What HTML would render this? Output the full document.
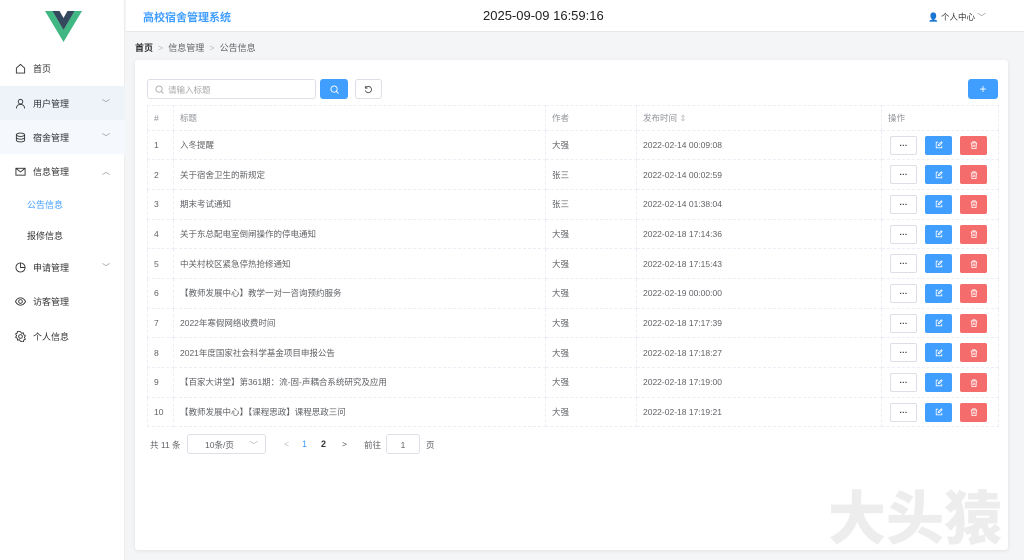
<!DOCTYPE html>
<html><head><meta charset="utf-8"><style>
*{box-sizing:border-box;margin:0;padding:0}
body{width:1024px;height:560px;overflow:hidden;background:#f4f5f7;font-family:"Liberation Sans","Noto Sans CJK SC",sans-serif;color:#606266;font-size:9px;position:relative}
.side{position:absolute;left:0;top:0;width:125px;height:560px;background:#fff;border-right:1px solid #eee}
.mi{position:absolute;left:0;width:125px;height:34px;display:flex;align-items:center;padding-left:15px;font-size:9px;color:#303133}
.mi svg{margin-right:7px}
.mi .ar{position:absolute;right:15px;font-size:8px;color:#888}
.hdr{position:absolute;left:126px;top:0;right:0;height:32px;background:#fff;border-bottom:1px solid #e8e8e8}
.bc{position:absolute;left:135px;top:41px;font-size:9px;color:#606266}
.card{position:absolute;left:135px;top:60px;width:873px;height:490px;background:#fff;border-radius:3px;box-shadow:0 1px 4px rgba(0,0,0,.08)}
.btn{position:absolute;border-radius:3px;display:flex;align-items:center;justify-content:center}
table{position:absolute;left:147px;top:105px;border-collapse:collapse;font-size:8.5px}
td{border:1px dashed #ebeef5;height:29.7px;padding:0 0 0 6px;color:#606266}
tr.h td{height:24.5px;color:#909399}
.ops{position:relative}
.b1,.b2,.b3{position:absolute;top:5px;height:19px;width:27px;border-radius:2px;display:flex;align-items:center;justify-content:center}
.b1{left:8px;border:1px solid #dcdfe6;background:#fff;color:#333;font-weight:bold;font-size:8px}
.b2{left:43px;background:#409eff}
.b3{left:78px;background:#f56c6c}
</style></head><body>
<div class="side">
<svg style="position:absolute;left:45px;top:11px" width="37" height="31" viewBox="0 0 37 31"><path d="M0 0h7.5l11 19 11-19H37L18.5 31z" fill="#41b883"/><path d="M7.5 0h7l4 7 4-7h7l-11 19z" fill="#34495e"/></svg>
<div class="mi" style="top:51px"><svg width="11" height="11" viewBox="0 0 12 12" fill="none" stroke="#333" stroke-width="1"><path d="M1.5 5.5L6 1.5l4.5 4V11h-9z"/></svg>首页</div>
<div class="mi" style="top:86px;background:#eef3fa"><svg width="11" height="11" viewBox="0 0 12 12" fill="none" stroke="#333"><circle cx="6" cy="4" r="2.5"/><path d="M1.5 11.5c0-3 2-4.5 4.5-4.5s4.5 1.5 4.5 4.5"/></svg>用户管理<span class="ar">﹀</span></div>
<div class="mi" style="top:120px;background:#f5f8fc"><svg width="11" height="11" viewBox="0 0 12 12" fill="none" stroke="#333"><ellipse cx="6" cy="3" rx="4.5" ry="1.8"/><path d="M1.5 3v6c0 1 2 1.8 4.5 1.8s4.5-.8 4.5-1.8V3M1.5 6c0 1 2 1.8 4.5 1.8s4.5-.8 4.5-1.8"/></svg>宿舍管理<span class="ar">﹀</span></div>
<div class="mi" style="top:154px"><svg width="11" height="11" viewBox="0 0 12 12" fill="none" stroke="#333"><rect x="1" y="2.5" width="10" height="7.5"/><path d="M1 2.5l5 4 5-4"/></svg>信息管理<span class="ar">︿</span></div>
<div class="mi" style="top:187px;padding-left:27px;color:#409eff">公告信息</div>
<div class="mi" style="top:218px;padding-left:27px">报修信息</div>
<div class="mi" style="top:250px"><svg width="11" height="11" viewBox="0 0 12 12" fill="none" stroke="#333"><circle cx="6" cy="6" r="5"/><path d="M6 1v5h5"/></svg>申请管理<span class="ar">﹀</span></div>
<div class="mi" style="top:284px"><svg width="11" height="11" viewBox="0 0 12 12" fill="none" stroke="#333"><path d="M.5 6c1.5-3 3.5-4 5.5-4s4 1 5.5 4c-1.5 3-3.5 4-5.5 4S2 9 .5 6z"/><circle cx="6" cy="6" r="2"/></svg>访客管理</div>
<div class="mi" style="top:319px"><svg width="11" height="11" viewBox="0 0 12 12" fill="none" stroke="#333"><circle cx="6" cy="6" r="2"/><path d="M6 .8l1.2 1.6 2-.3.4 2 1.7 1.1-1 1.8 1 1.8-1.7 1.1-.4 2-2-.3L6 11.2 4.8 9.6l-2 .3-.4-2L.7 6.8l1-1.8-1-1.8 1.7-1.1.4-2 2 .3z"/></svg>个人信息</div>
</div>
<div class="hdr">
<div style="position:absolute;left:17px;top:9px;font-size:11px;color:#409eff;font-weight:bold">高校宿舍管理系统</div>
<div style="position:absolute;left:357px;top:8px;font-size:13px;color:#222">2025-09-09 16:59:16</div>
<div style="position:absolute;left:802px;top:11px;font-size:8.5px;color:#333">👤 个人中心 <span style="color:#888">﹀</span></div>
</div>
<div class="bc"><b style="color:#303133">首页</b> <span style="color:#bbb">&nbsp;&gt;&nbsp;</span> 信息管理 <span style="color:#bbb">&nbsp;&gt;&nbsp;</span> 公告信息</div>
<div class="card"></div>
<div style="position:absolute;left:147px;top:79px;width:169px;height:20px;border:1px solid #dcdfe6;border-radius:3px;font-size:8.5px;color:#aaa;padding:4px 0 0 20px">请输入标题<svg style="position:absolute;left:7px;top:5px" width="9" height="9" viewBox="0 0 10 10" fill="none" stroke="#aaa"><circle cx="4.5" cy="4.5" r="3.5"/><path d="M7 7l2.5 2.5"/></svg></div>
<div class="btn" style="left:320px;top:79px;width:28px;height:20px;background:#409eff"><svg width="9" height="9" viewBox="0 0 10 10" fill="none" stroke="#fff"><circle cx="4.5" cy="4.5" r="3.5"/><path d="M7 7l2.5 2.5"/></svg></div>
<div class="btn" style="left:355px;top:79px;width:27px;height:20px;border:1px solid #dcdfe6"><svg width="9" height="9" viewBox="0 0 10 10" fill="none" stroke="#555"><path d="M2 3A3.5 3.5 0 1 1 1.5 6"/><path d="M1.5 1v2.5H4"/></svg></div>
<div class="btn" style="left:968px;top:79px;width:30px;height:20px;background:#409eff;color:#fff;font-size:12px">+</div>
<table>
<tr class="h"><td style="width:26px">#</td><td style="width:372px">标题</td><td style="width:91px">作者</td><td style="width:245px">发布时间 <span style="color:#bbb">⇕</span></td><td style="width:117px">操作</td></tr>
<tr><td>1</td><td>入冬提醒</td><td>大强</td><td>2022-02-14 00:09:08</td><td class="ops"></td></tr>
<tr><td>2</td><td>关于宿舍卫生的新规定</td><td>张三</td><td>2022-02-14 00:02:59</td><td class="ops"></td></tr>
<tr><td>3</td><td>期末考试通知</td><td>张三</td><td>2022-02-14 01:38:04</td><td class="ops"></td></tr>
<tr><td>4</td><td>关于东总配电室倒闸操作的停电通知</td><td>大强</td><td>2022-02-18 17:14:36</td><td class="ops"></td></tr>
<tr><td>5</td><td>中关村校区紧急停热抢修通知</td><td>大强</td><td>2022-02-18 17:15:43</td><td class="ops"></td></tr>
<tr><td>6</td><td>【教师发展中心】教学一对一咨询预约服务</td><td>大强</td><td>2022-02-19 00:00:00</td><td class="ops"></td></tr>
<tr><td>7</td><td>2022年寒假网络收费时间</td><td>大强</td><td>2022-02-18 17:17:39</td><td class="ops"></td></tr>
<tr><td>8</td><td>2021年度国家社会科学基金项目申报公告</td><td>大强</td><td>2022-02-18 17:18:27</td><td class="ops"></td></tr>
<tr><td>9</td><td>【百家大讲堂】第361期：流-固-声耦合系统研究及应用</td><td>大强</td><td>2022-02-18 17:19:00</td><td class="ops"></td></tr>
<tr><td>10</td><td>【教师发展中心】【课程思政】课程思政三问</td><td>大强</td><td>2022-02-18 17:19:21</td><td class="ops"></td></tr>
</table>
<div style="position:absolute;left:150px;top:439px;font-size:8.5px;color:#606266">共 11 条</div>
<div style="position:absolute;left:187px;top:434px;width:79px;height:20px;border:1px solid #dcdfe6;border-radius:3px;font-size:8.5px;padding:4px 0 0 17px">10条/页 <span style="position:absolute;right:7px;color:#aaa">﹀</span></div>
<div style="position:absolute;left:284px;top:439px;font-size:8.5px;color:#bbb">&lt;</div>
<div style="position:absolute;left:302px;top:439px;font-size:9px;color:#409eff">1</div>
<div style="position:absolute;left:321px;top:439px;font-size:9px;color:#303133;font-weight:bold">2</div>
<div style="position:absolute;left:342px;top:439px;font-size:8.5px;color:#555">&gt;</div>
<div style="position:absolute;left:364px;top:439px;font-size:8.5px">前往</div>
<div style="position:absolute;left:386px;top:434px;width:34px;height:20px;border:1px solid #dcdfe6;border-radius:3px;font-size:8.5px;text-align:center;padding-top:5px">1</div>
<div style="position:absolute;left:426px;top:439px;font-size:8.5px">页</div>
<div style="position:absolute;left:828px;top:472px;font-size:58px;font-weight:900;color:#ededed;letter-spacing:0px;font-family:'Noto Sans CJK SC',sans-serif">大头猿</div>
<script>
document.querySelectorAll('.ops').forEach(function(td){td.innerHTML='<div class="b1">···</div><div class="b2"><svg width="8" height="8" viewBox="0 0 10 10" fill="none" stroke="#fff"><path d="M4 1.5H1.5v7h7V6"/><path d="M4 6l.3-1.5L8 1l1 1-3.5 3.7z"/></svg></div><div class="b3"><svg width="8" height="8" viewBox="0 0 10 10" fill="none" stroke="#fff"><path d="M1 2.5h8M3.5 2.5V1h3v1.5M2 2.5l.5 7h5l.5-7M4 4.5v3M6 4.5v3"/></svg></div>';});
</script>
</body></html>
